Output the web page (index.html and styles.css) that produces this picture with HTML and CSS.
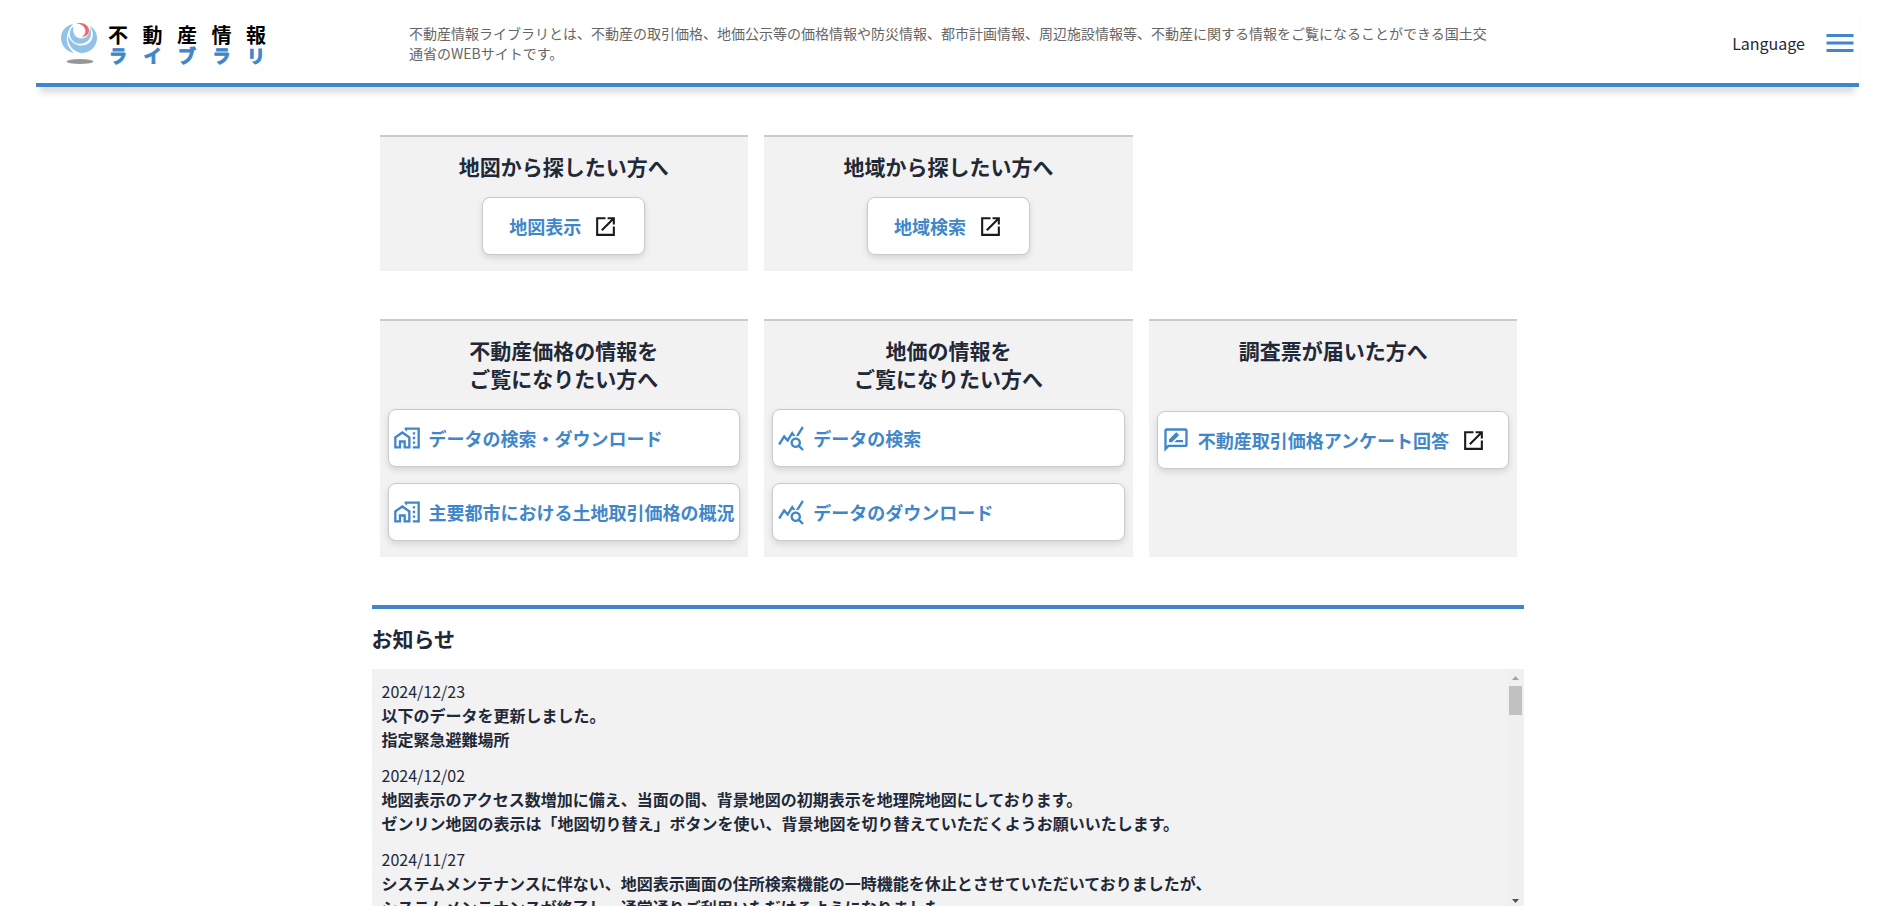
FILE: index.html
```html
<!DOCTYPE html>
<html lang="ja">
<head>
<meta charset="utf-8">
<meta name="viewport" content="width=device-width, initial-scale=1">
<title>不動産情報ライブラリ</title>
<link rel="stylesheet" href="styles.css">
</head>
<body>
<svg class="sprite" aria-hidden="true">
  <symbol id="i-open" viewBox="0 0 24 24"><path d="M5 5h7V3H3v18h18v-9h-2v7H5zM14 3v2h3.590l-9.830 9.830 1.410 1.410L19 6.410V10h2V3z"/></symbol>
  <symbol id="i-home" viewBox="0 0 24 24"><path d="M1 11v10h6v-5h2v5h6V11L8 6zm12 8h-2v-5H5v5H3v-7l5-3.500 5 3.500zM17 7h2v2h-2zM17 11h2v2h-2zM17 15h2v2h-2zM10 3v1.970l2 1.430V5h9v14h-4v2h6V3z"/></symbol>
  <symbol id="i-stats" viewBox="0 0 24 24"><path d="M19.88 18.47c.44-.7.7-1.51.7-2.39 0-2.49-2.01-4.5-4.5-4.5s-4.5 2.01-4.5 4.5 2.01 4.5 4.49 4.5c.88 0 1.7-.26 2.39-.7L21.58 23 23 21.58l-3.12-3.11zm-3.8.11c-1.38 0-2.5-1.12-2.5-2.5s1.12-2.5 2.5-2.5 2.5 1.12 2.5 2.5-1.12 2.5-2.5 2.5zm-.36-8.5c-.74.02-1.45.18-2.1.45l-.55-.83-3.8 6.18-3.01-3.52-3.63 5.81L1 17l5-8 3 3.5L13 6l2.72 4.08zm2.59.5c-.64-.28-1.33-.45-2.05-.49L21.38 2 23 3.18l-4.69 7.4z"/></symbol>
  <symbol id="i-review" viewBox="0 0 24 24"><path d="M20 2H4c-1.1 0-2 .9-2 2v18l4-4h14c1.1 0 2-.9 2-2V4c0-1.1-.9-2-2-2zm0 14H5.17L4 17.17V4h16v12zm-9.5-2H18v-2h-5.5zm3.860-5.870c.2-.2.2-.51 0-.71l-1.77-1.77c-.2-.2-.51-.2-.71 0L6 11.530V14h2.470z"/></symbol>
</svg>

<header class="header">
  <a class="logo" href="#" aria-label="不動産情報ライブラリ">
    <svg class="logo-mark" viewBox="0 0 36 42" aria-hidden="true">
      <g fill="#92c1e9">
        <path d="M12 1C4 2.500 0 9 0 15C0 22 5 28.500 13 30C7 25 5 19 6 13C7 8 9 4 12 1Z"/>
        <path d="M7 13C6 22 13 30 22 30C31 29 36 22 36 15C36 9.500 33 5 29 3C33 9 32.500 14.500 29.500 18.500C24 25 12 24 7 13Z"/>
        <path d="M12.500 3C7 8 8 15 13 19C19 23 27 20 29.500 14C30.500 10 30 6 28.500 4C29.500 10 26 15.500 20.500 15.500C14.500 15.500 11 10 12.500 3Z"/>
      </g>
      <path d="M15 0C22 -1 28 2 28 7.500C28 11.500 24.500 14 20.500 13.800C24 12 25 9 24 6C22.500 2 19 1 15 0Z" fill="#f0696f"/>
      <ellipse cx="19" cy="38.500" rx="13.300" ry="2.500" fill="#969696"/>
    </svg>
    <span class="logo-text">
      <span class="logo-row"><span>不</span><span>動</span><span>産</span><span>情</span><span>報</span></span>
      <span class="logo-row logo-kana"><span>ラ</span><span>イ</span><span>ブ</span><span>ラ</span><span>リ</span></span>
    </span>
  </a>
  <p class="intro">不動産情報ライブラリとは、不動産の取引価格、地価公示等の価格情報や防災情報、都市計画情報、周辺施設情報等、不動産に関する情報をご覧になることができる国土交通省のWEBサイトです。</p>
  <div class="tools">
    <a class="language" href="#">Language</a>
    <button class="menu" type="button" aria-label="メニュー"><svg viewBox="0 0 24 24"><path d="M3 6h18v2H3zM3 11h18v2H3zM3 16h18v2H3z"/></svg></button>
  </div>
</header>

<main class="main">
  <div class="cards">
    <section class="card">
      <h2 class="title">地図から探したい方へ</h2>
      <a class="btn btn-short" href="#">地図表示<svg class="icon-open"><use href="#i-open"/></svg></a>
    </section>
    <section class="card">
      <h2 class="title">地域から探したい方へ</h2>
      <a class="btn btn-short" href="#">地域検索<svg class="icon-open"><use href="#i-open"/></svg></a>
    </section>
  </div>

  <div class="cards">
    <section class="card">
      <h2 class="title">不動産価格の情報を<br>ご覧になりたい方へ</h2>
      <a class="btn" href="#"><svg class="icon"><use href="#i-home"/></svg>データの検索・ダウンロード</a>
      <a class="btn" href="#"><svg class="icon"><use href="#i-home"/></svg>主要都市における土地取引価格の概況</a>
    </section>
    <section class="card">
      <h2 class="title">地価の情報を<br>ご覧になりたい方へ</h2>
      <a class="btn" href="#"><svg class="icon"><use href="#i-stats"/></svg>データの検索</a>
      <a class="btn" href="#"><svg class="icon"><use href="#i-stats"/></svg>データのダウンロード</a>
    </section>
    <section class="card card-survey">
      <h2 class="title">調査票が届いた方へ</h2>
      <a class="btn" href="#"><svg class="icon"><use href="#i-review"/></svg>不動産取引価格アンケート回答<svg class="icon-open"><use href="#i-open"/></svg></a>
    </section>
  </div>

  <section class="news">
    <h2 class="title">お知らせ</h2>
    <div class="news-box">
      <dl class="news-list" tabindex="0">
        <dt>2024/12/23</dt>
        <dd>以下のデータを更新しました。<br>指定緊急避難場所</dd>
        <dt>2024/12/02</dt>
        <dd>地図表示のアクセス数増加に備え、当面の間、背景地図の初期表示を地理院地図にしております。<br>ゼンリン地図の表示は「地図切り替え」ボタンを使い、背景地図を切り替えていただくようお願いいたします。</dd>
        <dt>2024/11/27</dt>
        <dd>システムメンテナンスに伴ない、地図表示画面の住所検索機能の一時機能を休止とさせていただいておりましたが、<br>システムメンテナンスが終了し、通常通りご利用いただけるようになりました。</dd>
      </dl>
      <div class="scrollbar" aria-hidden="true">
        <svg class="arrow" viewBox="0 0 17 17"><path d="M5 11L8.500 7L12 11Z" fill="#a3a3a3"/></svg>
        <div class="thumb"></div>
        <svg class="arrow arrow-down" viewBox="0 0 17 17"><path d="M5 7L8.500 11L12 7Z" fill="#505050"/></svg>
      </div>
    </div>
  </section>
</main>
</body>
</html>
```
FILE: styles.css
```css
* { box-sizing: border-box; }

body {
  margin: 0;
  padding: 0 33px 0 36px;
  background: #fff;
  color: #1f2937;
  font-family: "Noto Sans CJK JP", sans-serif;
  font-size: 16px;
  line-height: 24px;
}

a { color: inherit; text-decoration: none; }
h2, p, dl, dd { margin: 0; }
.sprite { position: absolute; width: 0; height: 0; }

.header {
  display: flex;
  align-items: center;
  min-height: 87px;
  padding: 2px 1px 0 25px;
  border-bottom: 4px solid #3f87c9;
  box-shadow: 0 10px 6px -4px rgba(0, 0, 0, .13);
}

.logo { display: flex; gap: 11px; width: 348px; flex-shrink: 0; padding-top: 2px; }
.logo-mark { width: 36px; height: 42px; }
.logo-text { width: 158px; padding-top: 1px; color: #000; font-weight: 700; }
.logo-row {
  display: flex;
  justify-content: space-between;
  font-size: 20px;
  line-height: 22px;
}
.logo-kana { padding: 0 1px; color: #3f87c9; font-size: 18px; line-height: 18px; -webkit-text-stroke: 1px; }

.intro {
  flex: 0 1 1084px;
  color: #666;
  font-size: 14px;
  line-height: 20px;
}

.tools { display: flex; align-items: center; gap: 17px; margin-left: auto; }
.menu { display: block; padding: 0; border: 0; background: none; cursor: pointer; }
.menu svg { display: block; width: 36px; height: 36px; fill: #3f87c9; }

.main { max-width: 1152px; margin: 0 auto; }

.cards {
  display: grid;
  grid-template-columns: repeat(3, 1fr);
  gap: 16px;
  margin-top: 48px;
  padding: 0 6px 0 8px;
}
.card {
  display: flex;
  flex-direction: column;
  align-items: center;
  gap: 16px;
  padding: 15px 8px 16px;
  border-top: 2px solid #cacaca;
  background: #f2f2f2;
}
.card .title { padding-bottom: 1px; text-align: center; }
.card-survey { gap: 46px; }

.title { font-size: 21px; line-height: 28px; font-weight: 700; }

.btn {
  display: flex;
  align-items: center;
  width: 100%;
  height: 58px;
  padding: 0 4px;
  border: 1px solid #cacaca;
  border-radius: 8px;
  background: #fff;
  box-shadow: 0 3px 6px rgba(0, 0, 0, .12);
  color: #3f87c9;
  font-size: 18px;
  font-weight: 700;
  white-space: nowrap;
}
.btn-short { width: auto; padding: 0 26px; }
.icon { width: 28px; height: 28px; margin-right: 8px; flex-shrink: 0; fill: #3f87c9; }
.icon-open { width: 25px; height: 25px; margin-left: 12px; flex-shrink: 0; fill: #1a1a1a; }

.news { margin-top: 48px; padding-top: 15px; border-top: 4px solid #3f87c9; }
.news-box {
  display: flex;
  height: 240px;
  margin-top: 17px;
  background: #f2f2f2;
}
.news-list {
  flex: 1;
  padding: 10px;
  overflow-y: auto;
  scrollbar-width: none;
}
.news-list dd { margin-bottom: 12px; font-weight: 700; }

.scrollbar {
  display: flex;
  flex-direction: column;
  width: 17px;
  background: #f0f0f0;
}
.arrow { width: 17px; height: 17px; }
.arrow-down { margin-top: auto; }
.thumb { height: 29px; margin: 0 2px; background: #c1c1c1; }
```
